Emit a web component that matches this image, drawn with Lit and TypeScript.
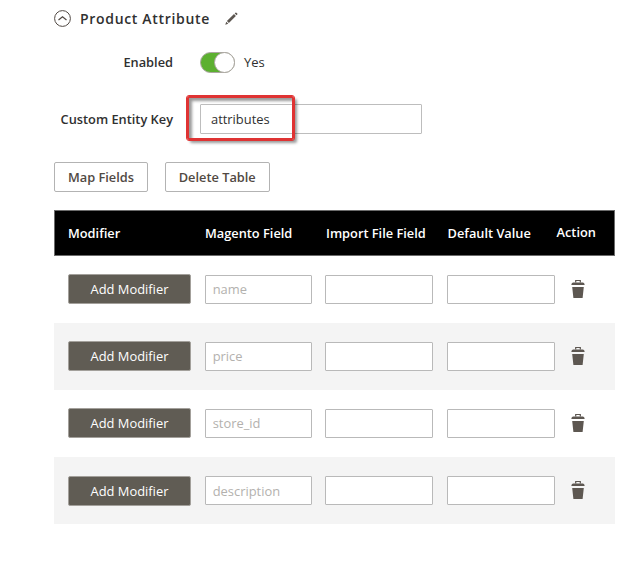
import { LitElement, html, css } from "lit";
import { customElement, property } from "lit/decorators.js";

@customElement("attribute-row")
class AttributeRow extends LitElement {
  @property() name = "";

  static styles = css`
    :host {
      display: grid;
      grid-template-columns: 123px 107px 108px 108px 14px;
      column-gap: 13.700px;
      padding-left: 14px;
      align-items: center;
      height: 67.2px;
      box-sizing: border-box;
    }
    button {
      height: 30px;
      padding: 0;
      border: 1px solid #a3a09b;
      border-radius: 2px;
      background: #605c54;
      color: #fff;
      font: 12.9px "Open Sans", sans-serif;
    }
    input {
      box-sizing: border-box;
      width: 100%;
      min-width: 0;
      height: 29px;
      padding: 0 7px;
      border: 1px solid #b9b9b9;
      border-radius: 1px;
      background: #fff;
      color: #303030;
      font: 12.9px "Open Sans", sans-serif;
    }
    input::placeholder { color: #b3b1ae; opacity: 1; }
    svg { display: block; margin: -1px 0 0 2px; }
  `;

  render() {
    return html`
      <button>Add Modifier</button>
      <input placeholder=${this.name} />
      <input />
      <input />
      <svg width="14" height="20" viewBox="0 0 14 20">
        <path d="M4.700 3.500V1.500h4.600v2" fill="none" stroke="#5d5751" stroke-width="1.200" />
        <path d="M2 3.600h10q1.500.300 1.700 2.400H.3Q.5 3.900 2 3.600zM1.200 8h11.600L11.600 19H2.400z" fill="#5d5751" />
      </svg>
    `;
  }
}

@customElement("app-root")
class AppRoot extends LitElement {
  private fields = ["name", "price", "store_id", "description"];

  static styles = css`
    :host {
      display: block;
      box-sizing: border-box;
      width: 632px;
      height: 571px;
      padding-left: 54px;
      overflow: hidden;
      background: #fff;
      color: #303030;
      font: 13px/18px "Open Sans", sans-serif;
    }
    .title { display: flex; align-items: center; height: 36px; }
    h2 { margin: 0 15px 0 9px; font-size: 14px; font-weight: 600; letter-spacing: 0.68px; line-height: 20px; padding-top: 1px; }
    .field { display: grid; grid-template-columns: 119px auto; column-gap: 27px; align-items: center; justify-content: start; }
    .label { text-align: right; font-weight: 600; font-size: 12.8px; }
    .enabled { height: 52px; }
    .key { height: 62px; }
    .switch { display: flex; align-items: center; }
    .track {
      box-sizing: border-box;
      width: 35px;
      height: 21px;
      margin-right: 9px;
      border: 1px solid #aaa6a0;
      border-radius: 11px;
      background: #5cb030;
    }
    .knob { box-sizing: border-box; width: 21px; height: 21px; margin: -1px 0 0 13px; border: 1px solid #aaa6a0; border-radius: 50%; background: #fff; }
    .entry { position: relative; width: 222px; }
    .entry input {
      display: block;
      box-sizing: border-box;
      width: 222px;
      height: 30px;
      padding: 0 10px;
      border: 1px solid #bdbdbd;
      border-radius: 1px;
      color: #303030;
      font: 12.9px "Open Sans", sans-serif;
    }
    .highlight {
      position: absolute;
      left: -13px;
      top: -8px;
      box-sizing: border-box;
      width: 107px;
      height: 44px;
      border: 2px solid #df3333;
      border-radius: 2px;
      outline: 0.500px solid #df3333;
      box-shadow: 3px 3px 3px rgba(0, 0, 0, 0.4), inset 3px 3px 3px rgba(0, 0, 0, 0.4);
      pointer-events: none;
    }
    .actions { display: flex; gap: 16.500px; margin-top: 12px; }
    .actions button {
      height: 30px;
      padding: 0;
      border: 1px solid #b3b3b3;
      border-radius: 2px;
      background: #fff;
      color: #514943;
      font: 600 12.8px "Open Sans", sans-serif;
    }
    .map { width: 94px; }
    .delete { width: 105.500px; }
    .table { width: 561px; margin-top: 18px; }
    .head {
      display: grid;
      grid-template-columns: 137px 121px 121.500px 109px auto;
      align-items: center;
      box-sizing: border-box;
      height: 46px;
      padding-left: 13px;
      border: 1px solid #6b6b6b;
      background: #000;
      color: #fff;
      font-size: 12.8px;
      font-weight: 600;
      white-space: nowrap;
    }
    .action { padding-bottom: 2px; }
    .rows { margin-top: -0.600px; }
    attribute-row:nth-child(even) { background: #f4f4f4; }
  `;

  render() {
    return html`
      <div class="title">
        <svg width="17" height="17" viewBox="0 0 17 17" fill="none" stroke="#514943">
          <circle cx="8.500" cy="8.500" r="7.900" />
          <path d="M4.500 10l4-3.300 4 3.300" stroke-width="1.200" />
        </svg>
        <h2>Product Attribute</h2>
        <svg width="13" height="13" viewBox="0 0 13 13" fill="#5d5751">
          <path d="M.3 12.700l.9-3 2.100 2.100zM1.900 9L9 2.100l1.900 1.900-7 6.900zM9.700 1.400l.7-.7q.5-.4 1 0l.9.900q.4.500 0 1l-.7.700z" />
        </svg>
      </div>
      <div class="field enabled">
        <span class="label">Enabled</span>
        <div class="switch"><div class="track"><div class="knob"></div></div><span>Yes</span></div>
      </div>
      <div class="field key">
        <span class="label">Custom Entity Key</span>
        <div class="entry"><input .value=${"attributes"} /><div class="highlight"></div></div>
      </div>
      <div class="actions">
        <button class="map">Map Fields</button>
        <button class="delete">Delete Table</button>
      </div>
      <div class="table">
        <div class="head">
          <span>Modifier</span><span>Magento Field</span><span>Import File Field</span><span>Default Value</span><span class="action">Action</span>
        </div>
        <div class="rows">
          ${this.fields.map((f) => html`<attribute-row .name=${f}></attribute-row>`)}
        </div>
      </div>
    `;
  }
}
